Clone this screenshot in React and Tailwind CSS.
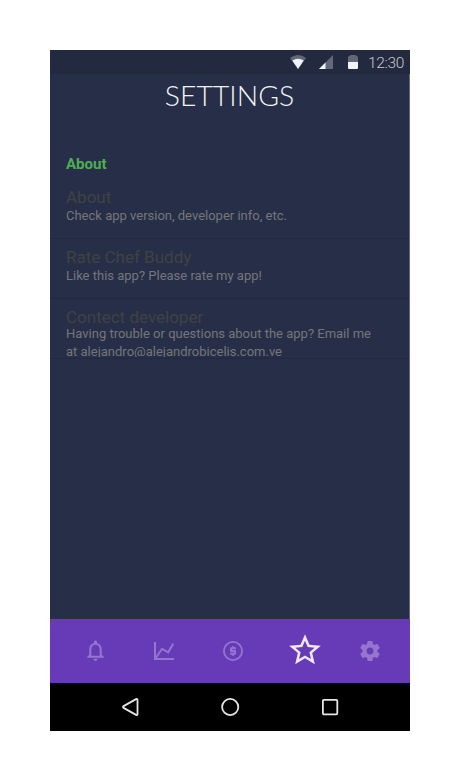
import React from 'react';

function StatusBar() {
  return (
    <div className="flex h-6 items-center justify-end bg-[#23293e] pr-[5px]">
      <svg className="mr-[13px]" width="16" height="14" viewBox="0 0 16 14">
        <path d="M0 3Q8-3 16 3L8 14Z" fill="#62677a" />
        <path d="M2.3 5.6Q8 2 13.7 5.6L8 14Z" fill="#f2f3f5" />
      </svg>
      <svg className="mr-[15px]" width="14" height="14" viewBox="0 0 14 14">
        <path d="M0 14L14 0V14Z" fill="#62677a" />
        <path d="M0 14L6.5 7.5V14Z" fill="#f2f3f5" />
      </svg>
      <svg className="mr-[10px]" width="10" height="14" viewBox="0 0 10 14">
        <path d="M0 7V2.4Q0 1.2 1.2 .9L2.5 0H7.5L8.8 .9Q10 1.2 10 2.4V7Z" fill="#62677a" />
        <path d="M0 7H10V13Q10 14 9 14H1Q0 14 0 13Z" fill="#f2f3f5" />
      </svg>
      <span className="w-[37px] whitespace-nowrap pt-[2px] text-[15.5px] leading-6 font-light tracking-[-0.3px] text-[#c8cad0]">12:30</span>
    </div>
  );
}

function Row({ title, children, tight }) {
  return (
    <div className="h-[60px] border-b border-[#23283f] pl-4">
      <div className={tight ? 'h-[26px] pt-2 text-[17px] leading-5 text-[#414243]' : 'h-7 pt-2 text-[17px] leading-5 text-[#414243]'}>{title}</div>
      <div className={tight ? 'h-[32px] overflow-hidden text-[13px] leading-[18px] text-[#757679]' : 'text-[13px] leading-[18px] text-[#757679]'}>{children}</div>
    </div>
  );
}

function TabBar() {
  return (
    <div className="flex h-16 items-center bg-[#673ab7] text-[#9575cd]">
      <svg className="mb-[2px] ml-[33px]" width="25" height="25" viewBox="0 0 24 24" fill="currentColor">
        <path d="M12 22c1.1 0 2-.9 2-2h-4c0 1.1.9 2 2 2zm6-6v-5c0-3.07-1.63-5.64-4.5-6.32V4c0-.83-.67-1.5-1.5-1.5s-1.5.67-1.5 1.5v.68C7.64 5.36 6 7.92 6 11v5l-2 2v1h16v-1l-2-2zm-2 1H8v-6c0-2.48 1.51-4.5 4-4.5s4 2.02 4 4.5v6z" />
      </svg>
      <svg className="ml-[46px]" width="20" height="18" viewBox="0 0 20 18" fill="none" stroke="currentColor" strokeWidth="2">
        <path d="M1 0V17H20" />
        <path d="M1.5 16.5L8 6.8L14.2 10.3L19.3 1.5" />
      </svg>
      <svg className="ml-[47px]" width="24" height="24" viewBox="0 0 24 24" fill="none" stroke="currentColor">
        <circle cx="12" cy="12" r="9.1" strokeWidth="1.8" />
        <path d="M15 9.2H10V12H14V14.8H9M12 7.2V9M12 15V16.8" strokeWidth="2" strokeLinejoin="round" />
      </svg>
      <svg className="mb-[2px] ml-[41px]" width="38" height="38" viewBox="0 0 24 24" fill="#eee8f7">
        <path d="M22 9.24l-7.19-.62L12 2 9.19 8.63 2 9.24l5.46 4.73L5.82 21 12 17.27 18.18 21l-1.63-7.03L22 9.24zM12 15.4l-3.76 2.27 1-4.28-3.32-2.88 4.38-.38L12 6.1l1.71 4.04 4.38.38-3.32 2.88 1 4.28L12 15.4z" />
      </svg>
      <svg className="ml-[34px]" width="24" height="24" viewBox="0 0 24 24" fill="currentColor">
        <path d="M19.43 12.98c.04-.32.07-.64.07-.98s-.03-.66-.07-.98l2.11-1.65c.19-.15.24-.42.12-.64l-2-3.46c-.12-.22-.39-.3-.61-.22l-2.49 1c-.52-.4-1.08-.73-1.69-.98l-.38-2.65A.488.488 0 0 0 14 2h-4c-.25 0-.46.18-.49.42l-.38 2.65c-.61.25-1.17.59-1.69.98l-2.49-1c-.23-.09-.49 0-.61.22l-2 3.46c-.13.22-.07.49.12.64l2.11 1.65c-.04.32-.07.65-.07.98s.03.66.07.98l-2.11 1.65c-.19.15-.24.42-.12.64l2 3.46c.12.22.39.3.61.22l2.49-1c.52.4 1.08.73 1.69.98l.38 2.65c.03.24.24.42.49.42h4c.25 0 .46-.18.49-.42l.38-2.65c.61-.25 1.17-.59 1.69-.98l2.49 1c.23.09.49 0 .61-.22l2-3.46c.12-.22.07-.49-.12-.64l-2.11-1.65zM12 15.5c-1.93 0-3.5-1.57-3.5-3.5s1.57-3.5 3.5-3.5 3.5 1.57 3.5 3.5-1.57 3.5-3.5 3.5z" />
      </svg>
    </div>
  );
}

function SystemNav() {
  return (
    <div className="flex h-12 items-center bg-black text-[#e6e6e6]">
      <svg className="ml-[71px]" width="19" height="20" viewBox="0 0 19 20" fill="none" stroke="currentColor" strokeWidth="1.8" strokeLinejoin="round">
        <path d="M2 10Q2 9.5 2.6 9.1L15 2.1Q16.5 1.5 16.5 3V17Q16.5 18.5 15 17.9L2.6 10.9Q2 10.5 2 10Z" />
      </svg>
      <svg className="ml-20" width="20" height="20" viewBox="0 0 20 20" fill="none" stroke="currentColor" strokeWidth="1.8">
        <circle cx="10.2" cy="10" r="8.1" />
      </svg>
      <svg className="ml-20" width="20" height="20" viewBox="0 0 20 20" fill="none" stroke="currentColor" strokeWidth="1.8">
        <rect x="2.9" y="2.9" width="14.4" height="14.4" rx="1" />
      </svg>
    </div>
  );
}

export default function App() {
  return (
    <div className="h-[781px] w-[460px] bg-white p-[50px] font-['Roboto',sans-serif]">
      <div className="flex h-[681px] w-[360px] flex-col bg-[#272f48]">
        <StatusBar />
        <div className="flex flex-1 flex-col border-r border-[#62677a]">
          <h1 className="h-[75px] pt-px text-center font-['Lato',sans-serif] text-[28.4px] leading-10 font-light text-[#f3f3f5]">SETTINGS</h1>
          <h2 className="h-[30px] pl-4 pt-[5px] text-[15px] leading-5 font-bold text-[#4caf50]">About</h2>
          <Row title="About">Check app version, developer info, etc.</Row>
          <Row title="Rate Chef Buddy">Like this app? Please rate my app!</Row>
          <Row title="Contect developer" tight>
            Having trouble or questions about the app? Email me<br />at alejandro@alejandrobicelis.com.ve
          </Row>
        </div>
        <TabBar />
        <SystemNav />
      </div>
    </div>
  );
}
